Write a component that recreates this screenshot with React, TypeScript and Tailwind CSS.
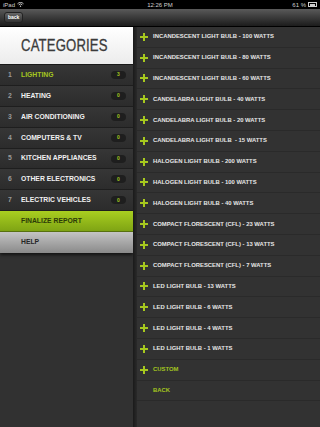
import React from 'react';

const categories = [
  { n: 1, label: 'LIGHTING', count: 3, active: true },
  { n: 2, label: 'HEATING', count: 0 },
  { n: 3, label: 'AIR CONDITIONING', count: 0 },
  { n: 4, label: 'COMPUTERS & TV', count: 0 },
  { n: 5, label: 'KITCHEN APPLIANCES', count: 0 },
  { n: 6, label: 'OTHER ELECTRONICS', count: 0 },
  { n: 7, label: 'ELECTRIC VEHICLES', count: 0 },
];

const bulbs = [
  'INCANDESCENT LIGHT BULB - 100 WATTS',
  'INCANDESCENT LIGHT BULB - 80 WATTS',
  'INCANDESCENT LIGHT BULB - 60 WATTS',
  'CANDELABRA LIGHT BULB - 40 WATTS',
  'CANDELABRA LIGHT BULB - 20 WATTS',
  'CANDELABRA LIGHT BULB  - 15 WATTS',
  'HALOGEN LIGHT BULB - 200 WATTS',
  'HALOGEN LIGHT BULB - 100 WATTS',
  'HALOGEN LIGHT BULB - 40 WATTS',
  'COMPACT FLORESCENT (CFL) - 23 WATTS',
  'COMPACT FLORESCENT (CFL) - 13 WATTS',
  'COMPACT FLORESCENT (CFL) - 7 WATTS',
  'LED LIGHT BULB - 13 WATTS',
  'LED LIGHT BULB - 6 WATTS',
  'LED LIGHT BULB - 4 WATTS',
  'LED LIGHT BULB - 1 WATTS',
];

const Plus = () => (
  <svg width="8" height="8" viewBox="0 0 8 8" className="shrink-0">
    <rect x="3" y="0" width="2" height="8" fill="#a6c81e" />
    <rect x="0" y="3" width="8" height="2" fill="#a6c81e" />
  </svg>
);

const StatusBar = () => (
  <div className="h-[9px] bg-black flex items-center justify-between px-[3px] text-[6px] leading-none text-[#cfcfcf]">
    <div className="flex items-center gap-[2px] w-[60px]">
      <span>iPad</span>
      <svg width="7" height="5" viewBox="0 0 7 5">
        <path d="M0.5 1.8 A4 4 0 0 1 6.5 1.8" stroke="#cfcfcf" strokeWidth="0.9" fill="none" />
        <path d="M1.7 2.9 A2.4 2.4 0 0 1 5.3 2.9" stroke="#cfcfcf" strokeWidth="0.9" fill="none" />
        <circle cx="3.5" cy="4.2" r="0.7" fill="#cfcfcf" />
      </svg>
    </div>
    <span>12:26 PM</span>
    <div className="flex items-center justify-end gap-[2px] w-[60px]">
      <span>61 %</span>
      <div className="w-[9px] h-[5px] border border-[#cfcfcf] p-[0.5px] flex">
        <div className="w-[5px] bg-[#cfcfcf]" />
      </div>
    </div>
  </div>
);

const NavBar = () => (
  <div className="h-[18px] bg-gradient-to-b from-[#5a5a5a] via-[#3a3a3a] to-[#1c1c1c] border-b border-black flex items-center px-[4px]">
    <div className="h-[11px] px-[3px] rounded-[3px] border border-[#222] bg-gradient-to-b from-[#666] to-[#333] flex items-center text-[5px] font-bold text-white">
      back
    </div>
  </div>
);

export default function App() {
  return (
    <div
      className="w-[320px] h-[427px] overflow-hidden flex flex-col bg-[#323232]"
      style={{ fontFamily: '"Liberation Sans", Arial, sans-serif' }}
    >
      <StatusBar />
      <NavBar />
      <div className="flex flex-1 min-h-0">
        <div className="w-[133px] flex flex-col bg-[#313131]">
          <div className="h-[38px] bg-gradient-to-b from-white to-[#ececec] flex items-center pl-[21px] border-b border-[#1a1a1a]">
            <span className="inline-block origin-left scale-x-[0.82] text-[16px] tracking-[0.2px] text-[#3b3b3b] [-webkit-text-stroke:0.3px_#3b3b3b]">
              CATEGORIES
            </span>
          </div>
          {categories.map((c) => (
            <div
              key={c.n}
              className="h-[20.9px] flex items-center border-b border-[#1e1e1e] bg-gradient-to-b from-[#363636] to-[#2c2c2c] font-bold text-[6.8px]"
            >
              <span className="w-[21px] pl-[8px] text-[#9a9a9a]">{c.n}</span>
              <span className={`flex-1 ${c.active ? 'text-[#a4c61f]' : 'text-[#f0f0f0]'}`}>{c.label}</span>
              <span className="mr-[7px] w-[15px] h-[8px] rounded-full bg-[#1e1e1e] flex items-center justify-center text-[5px] text-[#a4c61f]">
                {c.count}
              </span>
            </div>
          ))}
          <div className="h-[20.9px] flex items-center pl-[21px] bg-gradient-to-b from-[#a9cf20] to-[#7fa414] text-[6.8px] font-bold text-[#2b3a08] border-b border-[#5a7410]">
            FINALIZE REPORT
          </div>
          <div className="h-[20.9px] flex items-center pl-[21px] bg-gradient-to-b from-[#c4c4c4] to-[#8a8a8a] text-[6.8px] font-bold text-[#262626] shadow-[0_2px_3px_rgba(0,0,0,0.6)]">
            HELP
          </div>
        </div>
        <div className="w-[4px] bg-gradient-to-r from-[#1a1a1a] to-[#2a2a2a]" />
        <div className="flex-1 flex flex-col bg-[#323232]">
          {bulbs.map((b) => (
            <div key={b} className="h-[20.8px] flex items-center gap-[5px] pl-[3px] border-b border-[#2a2a2a] text-[5.9px] font-bold text-[#e6e6e6] whitespace-pre">
              <Plus />
              <span>{b}</span>
            </div>
          ))}
          <div className="h-[20.8px] flex items-center gap-[5px] pl-[3px] border-b border-[#2a2a2a] text-[5.9px] font-bold text-[#a4c61f]">
            <Plus />
            <span>CUSTOM</span>
          </div>
          <div className="h-[20.8px] flex items-center pl-[16px] border-b border-[#2a2a2a] text-[5.9px] font-bold text-[#a4c61f]">
            BACK
          </div>
        </div>
      </div>
    </div>
  );
}
